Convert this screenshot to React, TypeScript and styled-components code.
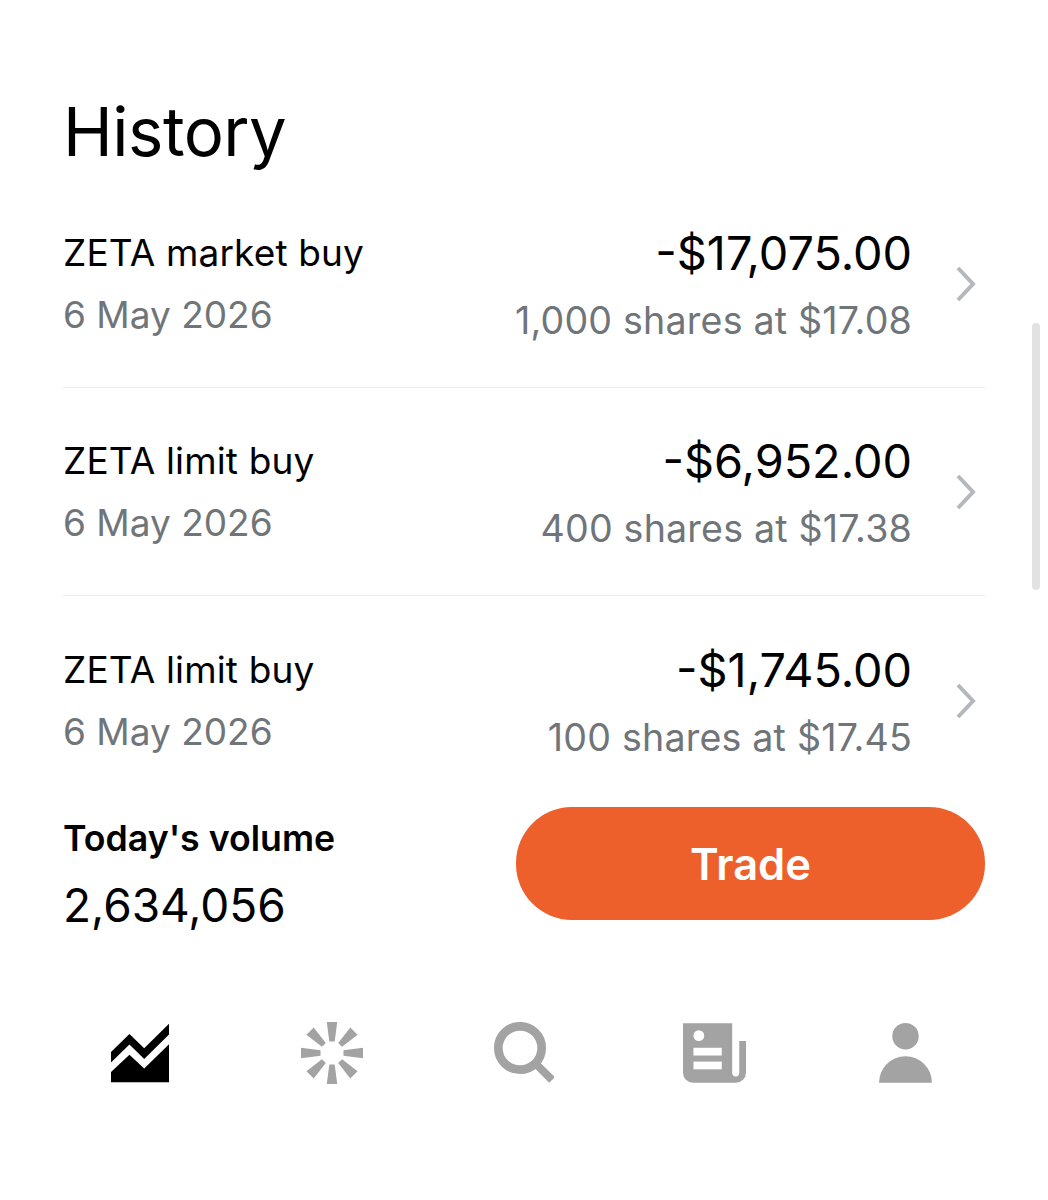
import React from 'react';
import styled, { createGlobalStyle } from 'styled-components';

const GlobalStyle = createGlobalStyle`
  html, body {
    margin: 0;
    padding: 0;
    background: #ffffff;
  }
  body {
    font-family: Inter, "Liberation Sans", sans-serif;
    color: #000000;
  }
`;

const Page = styled.div`
  position: relative;
  width: 1048px;
  height: 1200px;
  overflow: hidden;
  background: #ffffff;
`;

const Content = styled.main`
  padding: 93px 63px 0;
`;

const Title = styled.h1`
  margin: 0;
  font-size: 67px;
  line-height: 78px;
  font-weight: 400;
  letter-spacing: -0.5px;
`;

const List = styled.div`
  margin-top: 10px;
`;

const Row = styled.div<{ $last?: boolean; $gap: number }>`
  display: flex;
  align-items: center;
  justify-content: space-between;
  height: 207px;
  box-sizing: border-box;
  padding-bottom: 1px;
  margin-top: ${({ $gap }) => $gap}px;
  border-bottom: ${({ $last }) => ($last ? 'none' : '1px solid #ececec')};
`;

const LeftCol = styled.div`
  display: flex;
  flex-direction: column;
  gap: 14px;
`;

const RightCol = styled.div`
  display: flex;
  align-items: center;
  gap: 44px;
  padding-right: 9px;
`;

const Amounts = styled.div`
  display: flex;
  flex-direction: column;
  align-items: flex-end;
  gap: 20px;
  padding-top: 6px;
`;

const Name = styled.div`
  font-size: 37px;
  line-height: 48px;
  letter-spacing: 0.15px;
`;

const DateText = styled.div`
  font-size: 37px;
  line-height: 48px;
  color: #70757a;
  letter-spacing: 0;
`;

const Detail = styled.div`
  font-size: 37.6px;
  line-height: 48px;
  color: #70757a;
  letter-spacing: 0.2px;
`;

const Amount = styled.div`
  font-size: 46.8px;
  line-height: 48px;
`;

const Chevron = styled.svg`
  display: block;
  width: 20px;
  height: 36px;
  fill: none;
  stroke: #b4b8bc;
  stroke-width: 4;
`;

const Scrollbar = styled.div`
  position: absolute;
  top: 323px;
  left: 1032px;
  width: 8px;
  height: 267px;
  border-radius: 4px;
  background: #e2e2e2;
`;

const Footer = styled.div`
  display: flex;
  align-items: flex-start;
  justify-content: space-between;
  padding: 0 63px;
  margin-top: 2px;
`;

const Volume = styled.div`
  display: flex;
  flex-direction: column;
  gap: 19px;
  padding-top: 9px;
`;

const VolumeLabel = styled.div`
  font-size: 35.7px;
  line-height: 44px;
  font-weight: 600;
`;

const VolumeValue = styled.div`
  font-size: 46px;
  line-height: 52px;
`;

const TradeButton = styled.button`
  width: 469px;
  height: 113px;
  border: none;
  border-radius: 56px;
  background: #ee602b;
  color: #ffffff;
  font-family: inherit;
  font-size: 43.5px;
  font-weight: 600;
`;

const Nav = styled.nav`
  display: grid;
  grid-template-columns: repeat(5, 191.4px);
  padding: 89px 0 0 44.5px;
`;

const NavItem = styled.div`
  display: flex;
  align-items: center;
  justify-content: center;
  height: 66px;
`;

const NavIcon = styled.svg<{ $active?: boolean }>`
  display: block;
  fill: ${({ $active }) => ($active ? '#000000' : '#a3a3a3')};
`;

const rows = [
  { name: 'ZETA market buy', amount: '-$17,075.00', detail: '1,000 shares at $17.08', gap: 0 },
  { name: 'ZETA limit buy', amount: '-$6,952.00', detail: '400 shares at $17.38', gap: 1 },
  { name: 'ZETA limit buy', amount: '-$1,745.00', detail: '100 shares at $17.45', gap: 2 },
];

const spokes = [0, 45, 90, 135, 180, 225, 270, 315];

const App: React.FC = () => {
  return (
    <Page>
      <GlobalStyle />
      <Content>
        <Title>History</Title>
        <List>
          {rows.map((row, i) => (
            <Row key={i} $gap={row.gap} $last={i === rows.length - 1}>
              <LeftCol>
                <Name>{row.name}</Name>
                <DateText>6 May 2026</DateText>
              </LeftCol>
              <RightCol>
                <Amounts>
                  <Amount>{row.amount}</Amount>
                  <Detail>{row.detail}</Detail>
                </Amounts>
                <Chevron viewBox="0 0 20 36">
                  <path d="M2 2 L17 18 L2 34" />
                </Chevron>
              </RightCol>
            </Row>
          ))}
        </List>
      </Content>
      <Footer>
        <Volume>
          <VolumeLabel>Today's volume</VolumeLabel>
          <VolumeValue>2,634,056</VolumeValue>
        </Volume>
        <TradeButton>Trade</TradeButton>
      </Footer>
      <Nav>
        <NavItem>
          <NavIcon $active width="58" height="60" viewBox="153 71 173 178">
            <path d="M153 157 L208 103 L252 146 L326 73 L326 105 L252 178 L208 135 L153 188 Z" />
            <path d="M153 217 L208 165 L252 206 L326 134 L326 247 L153 247 Z" />
          </NavIcon>
        </NavItem>
        <NavItem>
          <NavIcon width="64" height="64" viewBox="-32 -32 64 64">
            {spokes.map((a) => (
              <polygon key={a} points="-5.2,-31 5.2,-31 2.7,-11.5 -2.7,-11.5" transform={`rotate(${a})`} />
            ))}
          </NavIcon>
        </NavItem>
        <NavItem>
          <NavIcon width="62" height="62" viewBox="-2 0 62 62">
            <circle cx="26" cy="26" r="21.7" fill="none" stroke="#a3a3a3" strokeWidth="8.7" />
            <path d="M41 41 L58 58" fill="none" stroke="#a3a3a3" strokeWidth="8" />
          </NavIcon>
        </NavItem>
        <NavItem>
          <NavIcon width="63" height="60" viewBox="636 78 187 177">
            <path d="M636 78 H782 V225 A10.5 11 0 0 0 803 225 V131 H823 V225 A30 30 0 0 1 793 255 H666 A30 30 0 0 1 636 225 Z" />
            <circle cx="683" cy="115" r="16" fill="#fff" />
            <rect x="667" y="151" width="84" height="23" fill="#fff" />
            <rect x="667" y="192" width="84" height="23" fill="#fff" />
          </NavIcon>
        </NavItem>
        <NavItem>
          <NavIcon width="53" height="60" viewBox="1228 72 156 177">
            <circle cx="1306" cy="111" r="39" />
            <path d="M1228 248 A78 78 0 0 1 1384 248 Z" />
          </NavIcon>
        </NavItem>
      </Nav>
      <Scrollbar />
    </Page>
  );
};

export default App;
